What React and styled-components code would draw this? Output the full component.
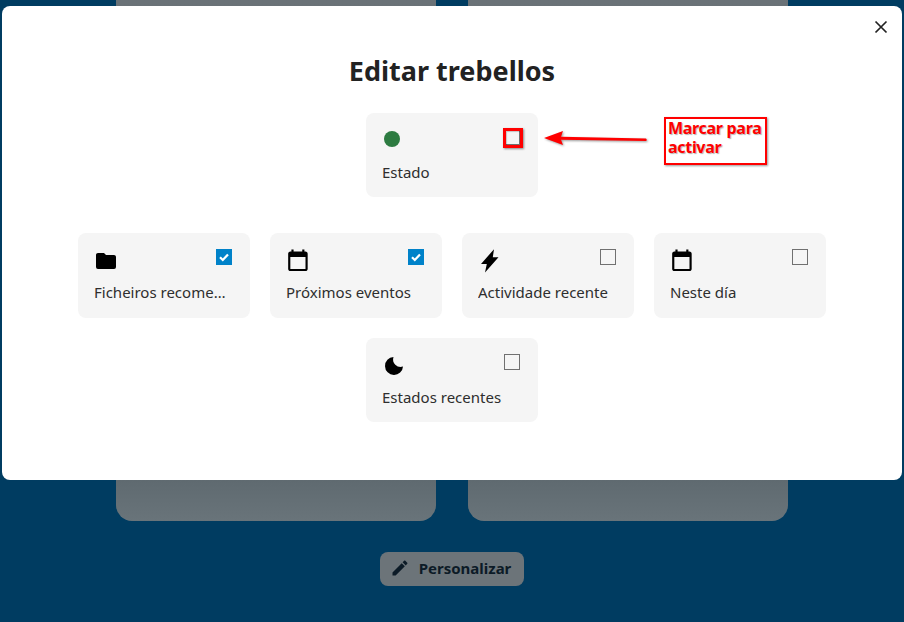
import React from 'react';
import styled, { createGlobalStyle } from 'styled-components';

const Global = createGlobalStyle`
  html, body { margin: 0; padding: 0; height: 100%; overflow: hidden; }
  body { font-family: "Noto Sans", sans-serif; background: #003c61; }
`;
const Page = styled.div`
  position: relative;
  width: 904px;
  height: 622px;
  background: #003c61;
  overflow: hidden;
`;
const Panels = styled.div`
  display: flex;
  justify-content: center;
  gap: 32px;
`;
const Panel = styled.div`
  width: 320px;
  height: 521px;
  border-radius: 0 0 16px 16px;
  background: linear-gradient(#6a7277 0, #5f6a70 480px, #69747a 521px);
`;
const CustomizeRow = styled.div`
  display: flex;
  justify-content: center;
  margin-top: 31px;
`;
const CustomizeButton = styled.button`
  display: flex;
  align-items: center;
  gap: 9px;
  height: 34px;
  padding: 0 13px 2px 10px;
  border: 0;
  border-radius: 8px;
  background: #6c7479;
  color: #0c1b27;
  font: 700 15px "Noto Sans", sans-serif;
`;
const Modal = styled.div`
  position: absolute;
  left: 2px;
  top: 6px;
  width: 900px;
  height: 474px;
  box-sizing: border-box;
  padding-top: 46px;
  border-radius: 8px;
  background: #fff;
  display: flex;
  flex-direction: column;
  align-items: center;
`;
const CloseButton = styled.button`
  position: absolute;
  right: 13px;
  top: 13px;
  width: 16px;
  height: 16px;
  padding: 0;
  border: 0;
  background: none;
  color: #222;
  display: flex;
`;
const Title = styled.h2`
  margin: 0;
  font: 700 27px/38px "Noto Sans", sans-serif;
  color: #222;
`;
const Tiles = styled.div`
  display: flex;
  flex-wrap: wrap;
  justify-content: center;
  gap: 20px;
  width: 748px;
  margin-top: ${p => p.$top}px;
`;
const Tile = styled.label`
  position: relative;
  box-sizing: border-box;
  width: 172px;
  height: 84.4px;
  padding: 16px 16px 0;
  border-radius: 8px;
  background: #f5f5f5;
  display: flex;
  flex-direction: column;
`;
const IconSlot = styled.span`
  width: 24px;
  height: 24px;
  display: flex;
  margin-bottom: 7px;
  color: #000;
`;
const Dot = styled.span`
  width: 16px;
  height: 16px;
  margin: 2px 0 0 2px;
  border-radius: 50%;
  background: #2d7b41;
`;
const TileName = styled.span`
  font-size: 15px;
  line-height: 24px;
  color: #2e2e2e;
  white-space: nowrap;
  overflow: hidden;
  text-overflow: ellipsis;
`;
const Check = styled.span`
  position: absolute;
  top: 16px;
  right: 18px;
  box-sizing: border-box;
  width: 16px;
  height: 16px;
  border: ${p => (p.$on ? '0' : '1px solid #707070')};
  background: ${p => (p.$on ? '#0082c9' : 'transparent')};
  display: flex;
  align-items: center;
  justify-content: center;
`;
const HighlightBox = styled.span`
  position: absolute;
  left: 503px;
  top: 128px;
  width: 20px;
  height: 20px;
  box-sizing: border-box;
  border: 3px solid #f00;
  box-shadow: 1px 1px 2px rgba(0,0,0,.45), inset 1px 1px 1px rgba(0,0,0,.2);
`;
const Arrow = styled.svg`
  position: absolute;
  left: 540px;
  top: 125px;
  filter: drop-shadow(1px 1px 1px rgba(0,0,0,.4));
`;
const Callout = styled.div`
  position: absolute;
  left: 664px;
  top: 117px;
  width: 103px;
  height: 48px;
  box-sizing: border-box;
  border: 2px solid #f00;
  padding: 0 0 0 2px;
  color: #f00;
  font: 700 16px/19px "Noto Sans", sans-serif;
  letter-spacing: -0.3px;
  text-shadow: 1px 1px 1px rgba(0,0,0,.3);
  box-shadow: 1px 1px 2px rgba(0,0,0,.4);
`;

const Mdi = ({ d, size = 24, box = '0 0 24 24' }) => (
  <svg width={size} height={size} viewBox={box} fill="currentColor"><path d={d} /></svg>
);
const FOLDER = 'M10,4H4C2.89,4 2,4.89 2,6V18A2,2 0 0,0 4,20H20A2,2 0 0,0 22,18V8C22,6.89 21.1,6 20,6H12L10,4Z';
const CAL = 'M19 3H18V1H16V3H8V1H6V3H5C3.9 3 3 3.9 3 5V19C3 20.1 3.9 21 5 21H19C20.1 21 21 20.1 21 19V5C21 3.9 20.1 3 19 3M19 19H5V8H19V19Z';
const CAL_BOX = '1 0.6 22.15 22.15';
const BOLT = 'M16 0.2L3 15H8.8L7 23.5L20.5 8.2H14.8Z';
const MOON = 'M11.5 3A9 9 0 1 0 21 12.5A7.5 7.5 0 0 1 11.5 3Z';
const PENCIL = 'M20.71,7.04C21.1,6.65 21.1,6 20.71,5.63L18.37,3.29C18,2.9 17.35,2.9 16.96,3.29L15.12,5.12L18.87,8.87M3,17.25V21H6.75L17.81,9.93L14.06,6.18L3,17.25Z';

const widgets = [
  { name: 'Ficheiros recomendados', d: FOLDER, on: true },
  { name: 'Próximos eventos', d: CAL, box: CAL_BOX, on: true },
  { name: 'Actividade recente', d: BOLT },
  { name: 'Neste día', d: CAL, box: CAL_BOX },
  { name: 'Estados recentes', d: MOON },
];
const CheckMark = () => (
  <svg width="12" height="12" viewBox="0 0 12 12" fill="none" stroke="#fff" strokeWidth="2.2"><path d="M2 6.2L4.8 9L10 3.4" /></svg>
);

export default function App() {
  return (
    <Page>
      <Global />
      <Panels><Panel /><Panel /></Panels>
      <CustomizeRow>
        <CustomizeButton><Mdi d={PENCIL} size={20} />Personalizar</CustomizeButton>
      </CustomizeRow>
      <Modal>
        <CloseButton aria-label="Pechar">
          <svg width="16" height="16" viewBox="0 0 16 16" stroke="currentColor" strokeWidth="1.7"><path d="M2.5 2.5L13.5 13.5M13.5 2.5L2.5 13.5" /></svg>
        </CloseButton>
        <Title>Editar trebellos</Title>
        <Tiles $top={23}>
          <Tile>
            <IconSlot><Dot /></IconSlot>
            <TileName>Estado</TileName>
            <Check />
          </Tile>
        </Tiles>
        <Tiles $top={36}>
          {widgets.map(w => (
            <Tile key={w.name}>
              <IconSlot><Mdi d={w.d} box={w.box} /></IconSlot>
              <TileName>{w.name}</TileName>
              <Check $on={w.on}>{w.on && <CheckMark />}</Check>
            </Tile>
          ))}
        </Tiles>
      </Modal>
      <HighlightBox />
      <Arrow width="110" height="28" viewBox="0 0 110 28">
        <path d="M4 13L23 6L21 11.7L106 13.5Q107.5 15 106 16L21 14.7L23 20Z" fill="#f00" />
      </Arrow>
      <Callout>Marcar para activar</Callout>
    </Page>
  );
}
